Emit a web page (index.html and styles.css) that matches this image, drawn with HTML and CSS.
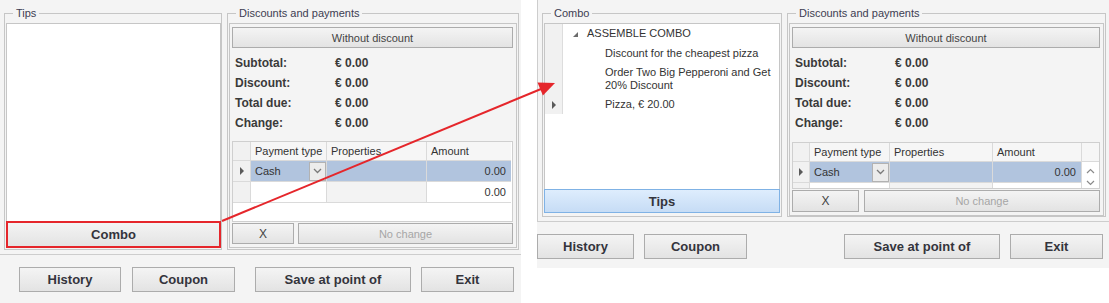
FILE: index.html
```html
<!DOCTYPE html>
<html>
<head>
<meta charset="utf-8">
<link rel="stylesheet" href="styles.css">
</head>
<body>
<div class="stage">
  <section class="screen screen-a">
    <div class="panel">
      <fieldset class="group group-tips">
        <legend>Tips</legend>
        <div class="list"></div>
        <button class="btn btn-side btn-marked">Combo</button>
      </fieldset>
      <fieldset class="group group-pay">
        <legend>Discounts and payments</legend>
        <div class="pay">
          <button class="btn btn-plain">Without discount</button>
          <dl class="summary">
            <dt>Subtotal:</dt><dd>€ 0.00</dd>
            <dt>Discount:</dt><dd>€ 0.00</dd>
            <dt>Total due:</dt><dd>€ 0.00</dd>
            <dt>Change:</dt><dd>€ 0.00</dd>
          </dl>
          <div class="grid grid-a">
            <div class="cell head ind"></div>
            <div class="cell head">Payment type</div>
            <div class="cell head">Properties</div>
            <div class="cell head end">Amount</div>
            <div class="cell ind"><span class="row-mark"></span></div>
            <div class="cell sel combo-cell">Cash<span class="dd"><svg width="9" height="6" viewBox="0 0 9 6"><polyline points="1,1 4.5,4.5 8,1" fill="none" stroke="#7a7a7a" stroke-width="1.3"/></svg></span></div>
            <div class="cell sel"></div>
            <div class="cell sel num end">0.00</div>
            <div class="cell ind"></div>
            <div class="cell"></div>
            <div class="cell shade"></div>
            <div class="cell num end">0.00</div>
          </div>
          <div class="actions">
            <button class="btn btn-x">X</button>
            <button class="btn btn-change" disabled>No change</button>
          </div>
        </div>
      </fieldset>
    </div>
    <div class="footer">
      <div class="fgroup fgroup-left">
        <button class="btn btn-foot w-history">History</button>
        <button class="btn btn-foot w-coupon">Coupon</button>
      </div>
      <div class="fgroup">
        <button class="btn btn-foot w-save">Save at point of</button>
        <button class="btn btn-foot w-exit">Exit</button>
      </div>
    </div>
  </section>

  <section class="screen screen-b">
    <div class="panel">
      <fieldset class="group group-combo">
        <legend>Combo</legend>
        <div class="tree">
          <div class="ti"></div>
          <div class="node root"><span class="exp"></span>ASSEMBLE COMBO</div>
          <div class="ti"></div>
          <div class="node">Discount for the cheapest pizza</div>
          <div class="ti"></div>
          <div class="node">Order Two Big Pepperoni and Get<br>20% Discount</div>
          <div class="ti"><span class="row-mark"></span></div>
          <div class="node">Pizza, € 20.00</div>
        </div>
        <button class="btn btn-side btn-tips">Tips</button>
      </fieldset>
      <fieldset class="group group-pay">
        <legend>Discounts and payments</legend>
        <div class="pay">
          <button class="btn btn-plain">Without discount</button>
          <dl class="summary">
            <dt>Subtotal:</dt><dd>€ 0.00</dd>
            <dt>Discount:</dt><dd>€ 0.00</dd>
            <dt>Total due:</dt><dd>€ 0.00</dd>
            <dt>Change:</dt><dd>€ 0.00</dd>
          </dl>
          <div class="grid grid-b">
            <div class="cell head ind"></div>
            <div class="cell head">Payment type</div>
            <div class="cell head">Properties</div>
            <div class="cell head">Amount</div>
            <div class="cell head end"></div>
            <div class="cell ind"><span class="row-mark"></span></div>
            <div class="cell sel combo-cell">Cash<span class="dd"><svg width="9" height="6" viewBox="0 0 9 6"><polyline points="1,1 4.5,4.5 8,1" fill="none" stroke="#7a7a7a" stroke-width="1.3"/></svg></span></div>
            <div class="cell sel"></div>
            <div class="cell sel num">0.00</div>
            <div class="scroll">
              <svg width="9" height="6" viewBox="0 0 9 6"><polyline points="1,5 4.5,1.5 8,5" fill="none" stroke="#8a8a8a" stroke-width="1.2"/></svg>
              <svg width="9" height="6" viewBox="0 0 9 6"><polyline points="1,1 4.5,4.5 8,1" fill="none" stroke="#8a8a8a" stroke-width="1.2"/></svg>
            </div>
            <div class="cell ind"></div>
            <div class="cell"></div>
            <div class="cell shade"></div>
            <div class="cell num"></div>
          </div>
          <div class="actions">
            <button class="btn btn-x">X</button>
            <button class="btn btn-change" disabled>No change</button>
          </div>
        </div>
      </fieldset>
    </div>
    <div class="footer">
      <div class="fgroup fgroup-left">
        <button class="btn btn-foot w-history">History</button>
        <button class="btn btn-foot w-coupon">Coupon</button>
      </div>
      <div class="fgroup">
        <button class="btn btn-foot w-save">Save at point of</button>
        <button class="btn btn-foot w-exit">Exit</button>
      </div>
    </div>
  </section>

  <svg class="arrow" width="1109" height="303" viewBox="0 0 1109 303">
    <line x1="222" y1="221" x2="541" y2="89" stroke="#e5262b" stroke-width="2"/>
    <polygon points="555,83 537.5,82.6 542.9,95.6" fill="#e5262b"/>
  </svg>
</div>
</body>
</html>
```

FILE: styles.css
```css
* { box-sizing: border-box; }

body {
  margin: 0;
  background: #ffffff;
  font-family: "Liberation Sans", Arial, sans-serif;
  font-size: 11px;
  color: #333333;
}

.stage {
  position: relative;
  width: 1109px;
  height: 303px;
  display: flex;
  gap: 16px;
  align-items: flex-start;
  overflow: hidden;
}

.screen {
  background: #f4f4f4;
  display: flex;
  flex-direction: column;
  flex: none;
}
.screen-a { width: 521px; height: 303px; }
.screen-b { width: 572px; height: 268px; }

.panel {
  display: flex;
  gap: 5px;
  border-bottom: 1px solid #cdcdcd;
}
.screen-a .panel { height: 255px; padding: 6px 2px 4px 4px; }
.screen-b .panel { height: 222px; padding: 6px 3px 4px 4px; border-left: 1px solid #cdcdcd; }

.group {
  margin: 0;
  padding: 2px 0 1px 1px;
  border: 1px solid #c6c6c6;
  display: flex;
  flex-direction: column;
  min-width: 0;
  height: 100%;
}
.group legend {
  padding: 0 3px;
  margin-left: 7px;
  line-height: 15px;
  font-size: 11px;
  color: #3d3d52;
}
.group-tips { width: 218px; flex: none; }
.group-combo { width: 240px; flex: none; padding-right: 1px; padding-bottom: 3px; }
.group-pay { flex: 1; padding-right: 1px; }

.list {
  flex: 1;
  background: #ffffff;
  border: 1px solid #c6c6c6;
  border-bottom: 0;
}

.btn {
  font-family: inherit;
  border: 1px solid #acacac;
  background: linear-gradient(#f4f4f4, #e3e3e3);
  color: #333333;
  padding: 0;
  margin: 0;
  flex: none;
}
.btn-side { height: 27px; font-weight: bold; font-size: 13px; color: #34343c; }
.btn-marked { outline: 2px solid #e5262b; outline-offset: -2px; }
.btn-tips {
  height: 24px;
  background: linear-gradient(#deedfd, #c6dcf5);
  border-color: #7fb2e5;
}

.pay {
  flex: 1;
  border: 1px solid #c6c6c6;
  padding: 3px 3px 3px 2px;
  display: flex;
  flex-direction: column;
}
.btn-plain { height: 21px; font-size: 11px; color: #444444; }

.summary {
  margin: 5px 0 0;
  padding-left: 3px;
  display: grid;
  grid-template-columns: 100px 1fr;
  grid-auto-rows: 20px;
  align-items: center;
  font-weight: bold;
  font-size: 12px;
  color: #3a3a3a;
}
.summary dt, .summary dd { margin: 0; }

.grid {
  display: grid;
  border: 1px solid #cfcfcf;
  background: #ffffff;
  align-content: start;
  overflow: hidden;
  flex: none;
}
.grid-a {
  margin-top: 8px;
  height: 81px;
  grid-template-columns: 18px 76px 100px 84px;
  grid-template-rows: 19px 21px 21px;
}
.grid-b {
  margin-top: 9px;
  height: 47px;
  grid-template-columns: 17px 80px 103px 89px 17px;
  grid-template-rows: 19px 21px 21px;
}

.cell {
  border-right: 1px solid #dadada;
  border-bottom: 1px solid #dadada;
  padding: 0 4px;
  display: flex;
  align-items: center;
  white-space: nowrap;
  min-width: 0;
  color: #333333;
}
.cell.end { border-right: 0; }
.head { background: #f6f6f6; }
.ind { background: #f1f1f1; padding: 0; justify-content: center; }
.sel { background: #b1c4de; }
.num { justify-content: flex-end; padding-right: 5px; }
.shade { background: #f3f3f3; }

.combo-cell { justify-content: space-between; padding-right: 0; }
.dd {
  width: 17px;
  height: 19px;
  border: 1px solid #b2b2b2;
  background: #ececec;
  display: flex;
  align-items: center;
  justify-content: center;
}

.row-mark {
  width: 0;
  height: 0;
  border-left: 4px solid #5a5a5a;
  border-top: 4px solid transparent;
  border-bottom: 4px solid transparent;
}

.scroll {
  grid-column: 5;
  grid-row: 2 / span 2;
  background: #ffffff;
  display: flex;
  flex-direction: column;
  align-items: center;
  gap: 6px;
  padding-top: 6px;
}

.actions { display: flex; gap: 4px; margin-top: 1px; height: 21px; flex: none; }
.screen-b .actions { gap: 5px; height: 22px; }
.btn-x { width: 62px; font-size: 12px; color: #444444; }
.screen-b .btn-x { width: 67px; }
.btn-change { flex: 1; color: #a6a6a6; font-size: 11px; }

.tree {
  flex: 1;
  background: #ffffff;
  border: 1px solid #c6c6c6;
  border-bottom: 0;
  display: grid;
  grid-template-columns: 18px 1fr;
  grid-template-rows: 19px 20px 32px 19px;
  align-content: start;
}
.tree .ti {
  background: #f1f1f1;
  border-right: 1px solid #dddddd;
  display: flex;
  align-items: center;
  justify-content: center;
}
.node {
  display: flex;
  align-items: center;
  padding-left: 42px;
  line-height: 13px;
  color: #333333;
}
.node.root { padding-left: 10px; gap: 9px; }
.exp {
  width: 0;
  height: 0;
  border-left: 5px solid transparent;
  border-bottom: 5px solid #6b6b6b;
  margin-top: 2px;
}

.footer {
  display: flex;
  justify-content: space-between;
  padding-top: 12px;
}
.screen-a .footer { padding-left: 19px; padding-right: 7px; }
.screen-b .footer { padding-right: 6px; }
.fgroup { display: flex; gap: 10px; }
.screen-a .fgroup-left { gap: 11px; }

.btn-foot { height: 25px; font-weight: bold; font-size: 13px; color: #34343c; }
.w-history { width: 102px; }
.screen-b .w-history { width: 97px; }
.w-coupon { width: 103px; }
.w-save { width: 156px; }
.w-exit { width: 93px; }

.arrow {
  position: absolute;
  left: 0;
  top: 0;
  pointer-events: none;
}
```
